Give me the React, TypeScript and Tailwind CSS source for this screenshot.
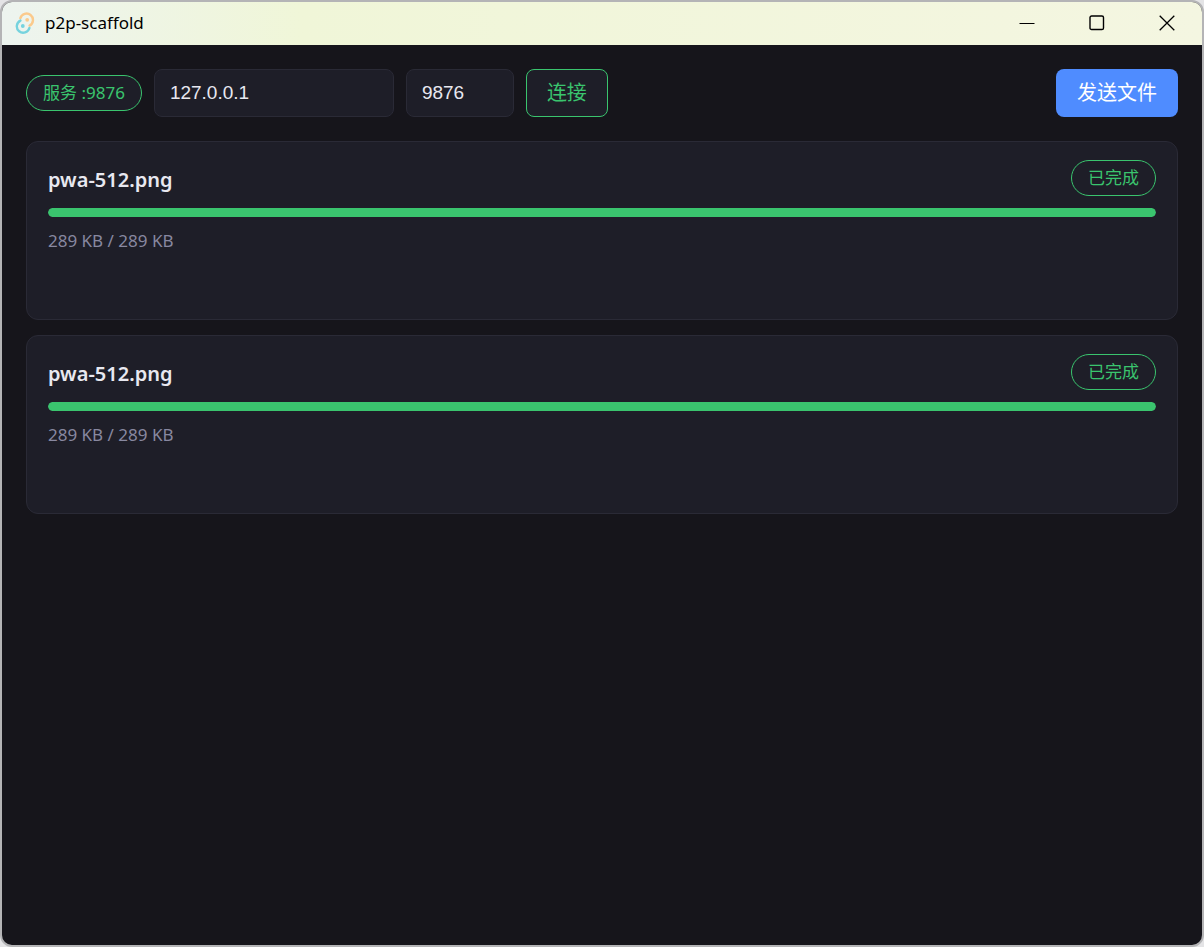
import React, { ReactNode, useState } from 'react';

interface Transfer {
    id: number;
    name: string;
    size: string;
    received: string;
    progress: number;
    status: string;
}

const transfers: Transfer[] = [
    { id: 1, name: 'pwa-512.png', size: '289 KB', received: '289 KB', progress: 100, status: '已完成' },
    { id: 2, name: 'pwa-512.png', size: '289 KB', received: '289 KB', progress: 100, status: '已完成' },
];

function AppLogo() {
    return (
        <svg width="20" height="22" viewBox="0 0 20 22" fill="none" strokeLinecap="round" aria-hidden="true">
            <path d="M5.4 6.2A6.4 6.4 0 1 1 14.6 13.6" stroke="#fbca8c" strokeWidth="2.4" />
            <path d="M14.4 16A6.4 6.4 0 1 1 5.4 8.6" stroke="#76d3de" strokeWidth="2.4" />
            <circle cx="12.2" cy="7.8" r="1.9" fill="#fbca8c" />
            <circle cx="7.8" cy="14" r="1.9" fill="#76d3de" />
        </svg>
    );
}

function TitleBar() {
    return (
        <header className="flex h-[43px] shrink-0 items-center bg-linear-to-r from-[#edf4ef] via-[#f0f6d8] via-25% to-[#f4f6e1] pb-[2px] pl-[13px] text-black">
            <AppLogo />
            <h1 className="ml-[10px] flex-1 font-['Noto_Sans',sans-serif] text-[17px] leading-6">p2p-scaffold</h1>
            <button type="button" aria-label="Minimize" className="flex h-full w-[70px] items-center justify-center">
                <svg width="16" height="16" viewBox="0 0 16 16" stroke="currentColor">
                    <path d="M0.5 8.5h15" />
                </svg>
            </button>
            <button type="button" aria-label="Maximize" className="flex h-full w-[70px] items-center justify-center">
                <svg width="16" height="16" viewBox="0 0 16 16" fill="none" stroke="currentColor" strokeWidth="1.4">
                    <rect x="1" y="1" width="13.5" height="13.5" rx="1.6" />
                </svg>
            </button>
            <button type="button" aria-label="Close" className="flex h-full w-[70px] items-center justify-center">
                <svg width="16" height="16" viewBox="0 0 16 16" stroke="currentColor" strokeWidth="1.3">
                    <path d="M0.7 0.7l14.6 14.6M15.3 0.7L0.7 15.3" />
                </svg>
            </button>
        </header>
    );
}

function Badge({ children }: { children: ReactNode }) {
    return (
        <span className="flex h-9 shrink-0 items-center rounded-full border border-[#3ac46e] bg-[#1e1e28] px-4 text-[17px] leading-6 whitespace-nowrap text-[#3ac46e]">
            {children}
        </span>
    );
}

function TransferCard({ transfer }: { transfer: Transfer }) {
    return (
        <li className="min-h-[179px] rounded-xl border border-[#2a2a36] bg-[#1e1e28] px-[21px] py-[18px]">
            <div className="flex items-end justify-between">
                <h2 className="text-[20px] leading-8 font-semibold text-[#e8e8f0]">{transfer.name}</h2>
                <Badge>{transfer.status}</Badge>
            </div>
            <div
                role="progressbar"
                aria-label={transfer.name}
                aria-valuenow={transfer.progress}
                className="mt-3 h-[9px] overflow-hidden rounded-full bg-[#2a2a36]"
            >
                <div className="h-full rounded-full bg-[#3ac46e]" style={{ width: `${transfer.progress}%` }} />
            </div>
            <p className="mt-3 text-[17px] leading-6 text-[#8888a0]">
                {transfer.received} / {transfer.size}
            </p>
        </li>
    );
}

export default function App() {
    const [host, setHost] = useState('127.0.0.1');
    const [port, setPort] = useState('9876');

    const field =
        "h-12 min-w-0 rounded-lg border border-[#2a2a36] bg-[#1e1e28] px-[15px] font-['Liberation_Sans',sans-serif] text-[19px] text-[#e8e8f0] outline-none";

    return (
        <div className="h-screen bg-[#e4e4e6]">
            <div className="flex h-full flex-col overflow-hidden rounded-xl border-2 border-[#b4b4b6] bg-[#16151b] font-['Noto_Sans','Noto_Sans_CJK_SC',sans-serif]">
                <TitleBar />
                <main className="flex-1 overflow-y-auto p-6">
                    <div className="flex items-center gap-3">
                        <Badge>服务 :9876</Badge>
                        <input
                            aria-label="IP"
                            className={`${field} w-60`}
                            value={host}
                            onChange={(e) => setHost(e.target.value)}
                        />
                        <input
                            aria-label="Port"
                            className={`${field} w-[108px]`}
                            value={port}
                            onChange={(e) => setPort(e.target.value)}
                        />
                        <button
                            type="button"
                            className="h-12 shrink-0 rounded-lg border border-[#3ac46e] bg-[#1e1e28] px-5 text-[20px] leading-7 text-[#3ac46e]"
                        >
                            连接
                        </button>
                        <button
                            type="button"
                            className="ml-auto h-12 shrink-0 rounded-lg bg-[#4f8cff] px-[21px] text-[20px] leading-7 text-white"
                        >
                            发送文件
                        </button>
                    </div>
                    <ul className="mt-6 flex flex-col gap-[15px]">
                        {transfers.map((transfer) => (
                            <TransferCard key={transfer.id} transfer={transfer} />
                        ))}
                    </ul>
                </main>
            </div>
        </div>
    );
}
